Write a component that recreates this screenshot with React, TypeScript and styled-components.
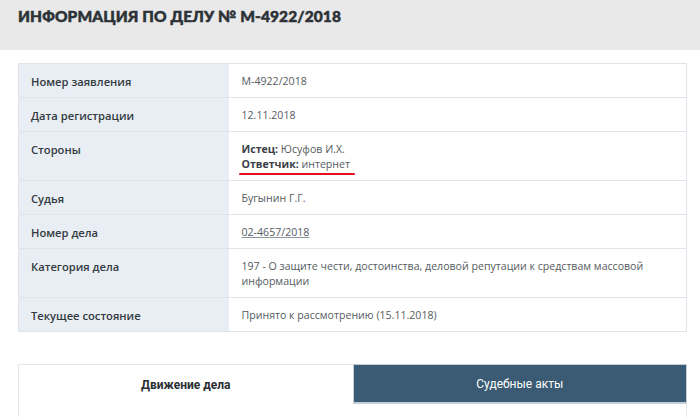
import React from "react";
import styled, { createGlobalStyle } from "styled-components";

const Global = createGlobalStyle`
  html, body { margin: 0; padding: 0; background: #ffffff; }
  body { font-family: "Open Sans", "Noto Sans", sans-serif; }
`;

const Page = styled.div`
  width: 700px;
  height: 417px;
  overflow: hidden;
  background: #fff;
`;

const Header = styled.header`
  height: 50px;
  background: #e9e9e9;
  padding: 6px 0 0 18px;
  box-sizing: border-box;
`;

const Title = styled.h1`
  margin: 0;
  font-family: "Lato", "Liberation Sans", sans-serif;
  font-weight: 900;
  font-size: 15.5px;
  line-height: 20px;
  letter-spacing: 0.1px;
  text-transform: uppercase;
  color: #2c3236;
  -webkit-text-stroke: 0.5px #2c3236;
`;

const Content = styled.main`
  padding: 13px 13px 0 18px;
`;

const Table = styled.table`
  width: 100%;
  border-collapse: collapse;
  border: 1px solid #dfe4ea;
  font-size: 10.6px;
  line-height: 15px;
`;

const Row = styled.tr`
  border-bottom: 1px solid #dfe4ea;
`;

const Label = styled.th`
  width: 210px;
  box-sizing: border-box;
  background: #e9eef4;
  text-align: left;
  vertical-align: top;
  font-size: 11.2px;
  font-weight: 600;
  color: #333a40;
  padding: 10px 12px 8px 12px;
`;

const Value = styled.td`
  vertical-align: top;
  color: #555b60;
  padding: 10px 13px 8px 13px;
`;

const Strong = styled.b`
  font-weight: 700;
  color: #3a4045;
`;

const Marked = styled.span`
  position: relative;
  &::after {
    content: "";
    position: absolute;
    left: -3px;
    right: -5px;
    bottom: -4px;
    height: 2px;
    border-radius: 2px;
    background: #e3101a;
  }
`;

const CaseLink = styled.a`
  color: #555b60;
  text-decoration: underline;
  text-decoration-color: #8a96a0;
`;

const Tabs = styled.div`
  margin-top: 32px;
  display: grid;
  grid-template-columns: 1fr 1fr;
`;

const Tab = styled.div<{ $active?: boolean }>`
  height: 40px;
  box-sizing: border-box;
  display: flex;
  align-items: center;
  justify-content: center;
  font-family: "Roboto", "Liberation Sans", sans-serif;
  font-size: 12px;
  font-weight: ${(p) => (p.$active ? 700 : 400)};
  color: ${(p) => (p.$active ? "#2a2f33" : "#ffffff")};
  background: ${(p) => (p.$active ? "#ffffff" : "#3a5b73")};
  border-top: 1px solid ${(p) => (p.$active ? "#e3e7ec" : "#c3ced8")};
  border-left: 1px solid ${(p) => (p.$active ? "#e3e7ec" : "#c3ced8")};
  border-right: ${(p) => (p.$active ? "none" : "1px solid #c3ced8")};
  border-bottom: ${(p) => (p.$active ? "none" : "2px solid #c3ced8")};
`;

const Panel = styled.div`
  height: 20px;
  border-left: 1px solid #e3e7ec;
  border-right: 1px solid #e3e7ec;
`;

const rows: { label: string; value: React.ReactNode }[] = [
  { label: "Номер заявления", value: "М-4922/2018" },
  { label: "Дата регистрации", value: "12.11.2018" },
  {
    label: "Стороны",
    value: (
      <>
        <Strong>Истец:</Strong> Юсуфов И.Х.
        <br />
        <Marked>
          <Strong>Ответчик:</Strong> интернет
        </Marked>
      </>
    ),
  },
  { label: "Судья", value: "Бугынин Г.Г." },
  { label: "Номер дела", value: <CaseLink href="#">02-4657/2018</CaseLink> },
  {
    label: "Категория дела",
    value:
      "197 - О защите чести, достоинства, деловой репутации к средствам массовой информации",
  },
  { label: "Текущее состояние", value: "Принято к рассмотрению (15.11.2018)" },
];

export default function App() {
  return (
    <Page>
      <Global />
      <Header>
        <Title>Информация по делу № М-4922/2018</Title>
      </Header>
      <Content>
        <Table>
          <tbody>
            {rows.map((r) => (
              <Row key={r.label}>
                <Label>{r.label}</Label>
                <Value>{r.value}</Value>
              </Row>
            ))}
          </tbody>
        </Table>
        <Tabs>
          <Tab $active>Движение дела</Tab>
          <Tab>Судебные акты</Tab>
        </Tabs>
        <Panel />
      </Content>
    </Page>
  );
}
